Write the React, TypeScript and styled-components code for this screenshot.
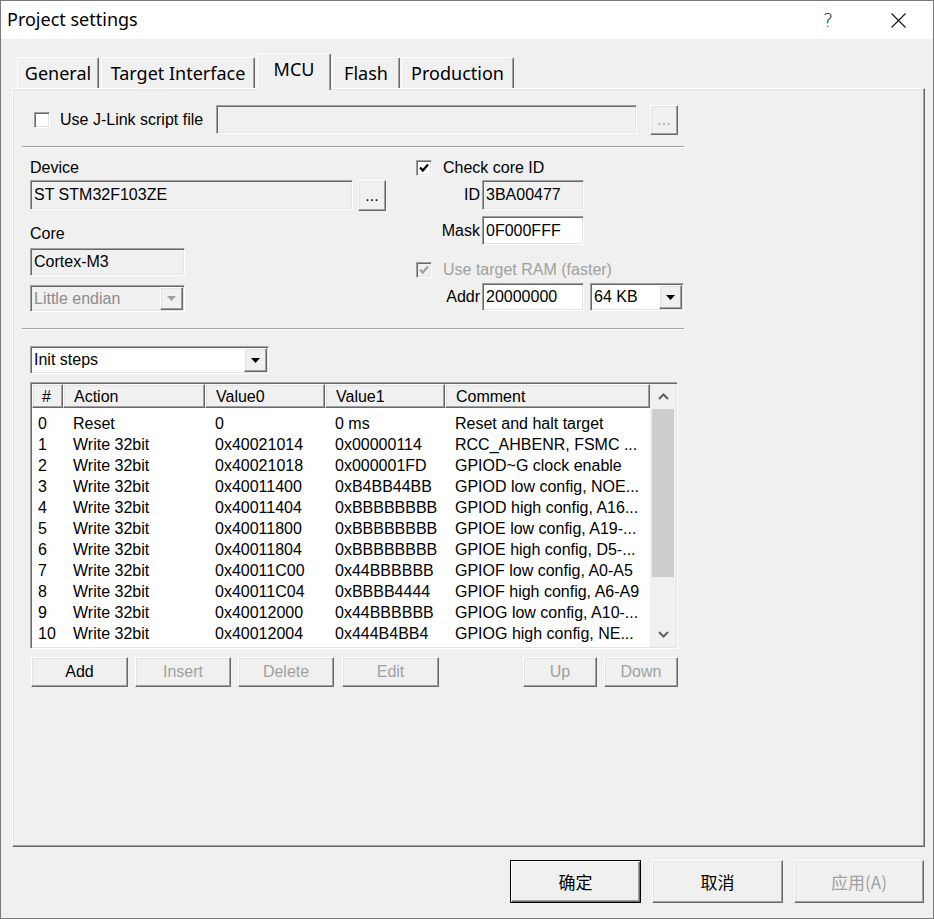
import React from "react";
import styled, { createGlobalStyle, css } from "styled-components";

const GlobalStyle = createGlobalStyle`
  html, body {
    margin: 0;
    padding: 0;
    background: #f0f0f0;
  }
  body {
    font-family: "Liberation Sans", Arial, sans-serif;
    font-size: 16px;
    color: #000;
  }
  * {
    box-sizing: border-box;
  }
`;

const sunken = css`
  border-style: solid;
  border-width: 1px;
  border-color: #a0a0a0 #ffffff #ffffff #a0a0a0;
  box-shadow: inset 1px 1px 0 #696969, inset -1px -1px 0 #e3e3e3;
`;

const raised = css`
  border-style: solid;
  border-width: 1px;
  border-color: #ffffff #696969 #696969 #ffffff;
  box-shadow: inset -1px -1px 0 #a0a0a0, inset 1px 1px 0 #e3e3e3;
`;

const Window = styled.div`
  width: 934px;
  height: 919px;
  display: flex;
  flex-direction: column;
  border: 1px solid #7a7a7a;
  background: #f0f0f0;
`;

const TitleBar = styled.div`
  height: 38px;
  background: #fff;
  display: flex;
  align-items: center;
  flex-shrink: 0;
`;

const TitleText = styled.div`
  flex: 1;
  padding-left: 6px;
  font-family: "Noto Sans", "Liberation Sans", sans-serif;
  font-size: 18px;
  line-height: 24px;
  margin-top: -2px;
`;

const CaptionButton = styled.div`
  width: 70px;
  height: 38px;
  display: flex;
  align-items: center;
  justify-content: center;
  font-family: "DejaVu Sans", "Liberation Sans", sans-serif;
  font-size: 19px;
  font-weight: 300;
  color: #222;
`;

const Body = styled.div`
  flex: 1;
  padding: 14px 9px 0 11px;
  display: flex;
  flex-direction: column;
`;

const TabStrip = styled.div`
  height: 35px;
  display: flex;
  align-items: flex-end;
  padding-left: 5px;
  position: relative;
  z-index: 1;
`;

const Tab = styled.div<{ $w: number; $active?: boolean; $gap: number }>`
  width: ${(p) => p.$w}px;
  height: ${(p) => (p.$active ? 37 : 31)}px;
  margin-right: ${(p) => p.$gap}px;
  margin-bottom: ${(p) => (p.$active ? -2 : 0)}px;
  background: #f0f0f0;
  border-top: 1px solid #fff;
  border-left: 1px solid #fff;
  border-right: 1px solid #696969;
  box-shadow: inset -1px 0 0 #a0a0a0;
  border-radius: 2px 2px 0 0;
  display: flex;
  justify-content: center;
  align-items: ${(p) => (p.$active ? "flex-start" : "center")};
  padding-top: ${(p) => (p.$active ? 3 : 0)}px;
  font-family: "Noto Sans", "Liberation Sans", sans-serif;
  font-size: 18px;
  line-height: 24px;
  white-space: nowrap;
`;

const Panel = styled.div`
  width: 913px;
  height: 759px;
  border-style: solid;
  border-width: 1px;
  border-color: #ffffff #696969 #696969 #ffffff;
  box-shadow: inset -1px -1px 0 #a0a0a0, inset 1px 1px 0 #e3e3e3;
  padding: 16px 0 0 17px;
  display: flex;
  flex-direction: column;
`;

const Row = styled.div<{ $mt?: number }>`
  display: flex;
  align-items: flex-start;
  margin-top: ${(p) => p.$mt ?? 0}px;
`;

const CheckLine = styled.div<{ $w?: number; $pl?: number; $gap: number; $mt?: number }>`
  display: flex;
  align-items: center;
  height: ${(p) => (p.$w ? 30 : 18)}px;
  width: ${(p) => (p.$w ? `${p.$w}px` : "auto")};
  padding-left: ${(p) => p.$pl ?? 0}px;
  gap: ${(p) => p.$gap}px;
  margin-top: ${(p) => p.$mt ?? 0}px;
  white-space: nowrap;
`;

const Box = styled.span<{ $off?: boolean }>`
  ${sunken};
  width: 16px;
  height: 16px;
  flex-shrink: 0;
  background: ${(p) => (p.$off ? "#f0f0f0" : "#fff")};
  display: flex;
  align-items: center;
  justify-content: center;
`;

const LabelText = styled.span<{ $off?: boolean }>`
  color: ${(p) => (p.$off ? "#a0a0a0" : "#000")};
  line-height: 18px;
`;

const Field = styled.div<{ $w: number; $h: number; $off?: boolean }>`
  ${sunken};
  width: ${(p) => p.$w}px;
  height: ${(p) => p.$h}px;
  background: ${(p) => (p.$off ? "#f0f0f0" : "#fff")};
  color: #000;
  display: flex;
  align-items: center;
  padding-left: 3px;
  white-space: nowrap;
  overflow: hidden;
  flex-shrink: 0;
`;

const FieldText = styled.span<{ $off?: boolean }>`
  flex: 1;
  color: ${(p) => (p.$off ? "#8c8c8c" : "#000")};
`;

const ArrowBox = styled.span<{ $off?: boolean }>`
  ${raised};
  width: 23px;
  align-self: stretch;
  margin: 1px 1px 1px 0;
  background: #f0f0f0;
  display: flex;
  align-items: center;
  justify-content: center;
  color: ${(p) => (p.$off ? "#a0a0a0" : "#000")};
`;

const Button = styled.button<{ $w: number; $h?: number; $off?: boolean; $default?: boolean; $cjk?: boolean }>`
  ${raised};
  width: ${(p) => p.$w}px;
  height: ${(p) => p.$h ?? 30}px;
  background: #f0f0f0;
  padding: 0;
  flex-shrink: 0;
  font-family: ${(p) =>
    p.$cjk
      ? `"Noto Sans CJK SC", "Noto Sans", sans-serif`
      : `"Liberation Sans", Arial, sans-serif`};
  font-size: ${(p) => (p.$cjk ? 17 : 16)}px;
  color: ${(p) => (p.$off ? "#a0a0a0" : "#000")};
  display: flex;
  align-items: center;
  justify-content: center;
  ${(p) =>
    p.$default &&
    css`
      border-color: #000;
      box-shadow: inset 1px 1px 0 #ffffff, inset -1px -1px 0 #696969,
        inset -2px -2px 0 #a0a0a0;
    `}
`;

const Separator = styled.div<{ $mt: number }>`
  width: 662px;
  height: 2px;
  margin: ${(p) => p.$mt}px 0 0 -8px;
  border-top: 1px solid #a0a0a0;
  border-bottom: 1px solid #ffffff;
`;

const Columns = styled.div`
  display: flex;
  margin-top: 11px;
  gap: 30px;
`;

const Column = styled.div<{ $w: number }>`
  width: ${(p) => p.$w}px;
  display: flex;
  flex-direction: column;
`;

const Caption = styled.div<{ $mt?: number }>`
  height: 18px;
  line-height: 18px;
  margin-top: ${(p) => p.$mt ?? 0}px;
`;

const FormRow = styled.div<{ $mt: number }>`
  display: flex;
  align-items: center;
  gap: 2px;
  margin-top: ${(p) => p.$mt}px;
`;

const FormLabel = styled.span`
  width: 64px;
  text-align: right;
  white-space: nowrap;
`;

const List = styled.div`
  ${sunken};
  width: 648px;
  height: 267px;
  margin-top: 8px;
  padding: 1px;
  background: #fff;
  display: flex;
`;

const ListMain = styled.div`
  flex: 1;
  display: flex;
  flex-direction: column;
  overflow: hidden;
`;

const HeaderRow = styled.div`
  display: flex;
  height: 24px;
  flex-shrink: 0;
`;

const HeaderCell = styled.div<{ $w: number }>`
  ${raised};
  width: ${(p) => p.$w}px;
  background: #f0f0f0;
  padding: 2px 0 0 ${(p) => (p.$w < 40 ? 9 : 10)}px;
  display: flex;
  align-items: center;
  white-space: nowrap;
`;

const ListBody = styled.div`
  padding-top: 5px;
  display: flex;
  flex-direction: column;
`;

const ItemRow = styled.div`
  display: flex;
  height: 21px;
  align-items: center;
`;

const Cell = styled.div<{ $w: number }>`
  width: ${(p) => p.$w}px;
  padding-left: ${(p) => (p.$w < 40 ? 6 : 10)}px;
  white-space: nowrap;
  overflow: hidden;
`;

const ScrollBar = styled.div`
  width: 26px;
  background: #f0f0f0;
  display: flex;
  flex-direction: column;
  align-items: center;
`;

const ScrollArrow = styled.div`
  height: 25px;
  width: 26px;
  display: flex;
  align-items: center;
  justify-content: center;
  flex-shrink: 0;
`;

const Thumb = styled.div`
  width: 22px;
  height: 168px;
  background: #cdcdcd;
  flex-shrink: 0;
`;

const Track = styled.div`
  flex: 1;
`;

const ButtonRow = styled.div`
  display: flex;
  width: 647px;
  margin: 8px 0 0 1px;
  gap: 7px;
`;

const Spacer = styled.div`
  flex: 1;
`;

const Footer = styled.div`
  display: flex;
  justify-content: flex-end;
  gap: 11px;
  margin-top: 13px;
`;

const Check = ({ off }: { off?: boolean }) => (
  <svg width="10" height="10" viewBox="0 0 10 10">
    <polyline
      points="1,4.5 3.8,7.5 9,1.5"
      fill="none"
      stroke={off ? "#a0a0a0" : "#000"}
      strokeWidth="2.2"
    />
  </svg>
);

const Down = () => (
  <svg width="9" height="5" viewBox="0 0 9 5">
    <path d="M0 0 H9 L4.5 5 Z" fill="currentColor" />
  </svg>
);

const Chevron = ({ up }: { up?: boolean }) => (
  <svg width="11" height="7" viewBox="0 0 11 7">
    <polyline
      points={up ? "1,6 5.5,1.5 10,6" : "1,1 5.5,5.5 10,1"}
      fill="none"
      stroke="#606060"
      strokeWidth="2"
    />
  </svg>
);

const CloseIcon = () => (
  <svg width="15" height="15" viewBox="0 0 15 15">
    <path d="M0.5 0.5 L14.5 14.5 M14.5 0.5 L0.5 14.5" stroke="#111" strokeWidth="1.1" />
  </svg>
);

const cols = [31, 142, 120, 120, 205];

const steps = [
  ["0", "Reset", "0", "0 ms", "Reset and halt target"],
  ["1", "Write 32bit", "0x40021014", "0x00000114", "RCC_AHBENR, FSMC ..."],
  ["2", "Write 32bit", "0x40021018", "0x000001FD", "GPIOD~G clock enable"],
  ["3", "Write 32bit", "0x40011400", "0xB4BB44BB", "GPIOD low config, NOE..."],
  ["4", "Write 32bit", "0x40011404", "0xBBBBBBBB", "GPIOD high config, A16..."],
  ["5", "Write 32bit", "0x40011800", "0xBBBBBBBB", "GPIOE low config, A19-..."],
  ["6", "Write 32bit", "0x40011804", "0xBBBBBBBB", "GPIOE high config, D5-..."],
  ["7", "Write 32bit", "0x40011C00", "0x44BBBBBB", "GPIOF low config, A0-A5"],
  ["8", "Write 32bit", "0x40011C04", "0xBBBB4444", "GPIOF high config, A6-A9"],
  ["9", "Write 32bit", "0x40012000", "0x44BBBBBB", "GPIOG low config, A10-..."],
  ["10", "Write 32bit", "0x40012004", "0x444B4BB4", "GPIOG high config, NE..."],
];

const tabs = [
  { name: "General", w: 82, gap: 2 },
  { name: "Target Interface", w: 154, gap: 2 },
  { name: "MCU", w: 74, gap: 1, active: true },
  { name: "Flash", w: 68, gap: 1 },
  { name: "Production", w: 113, gap: 0 },
];

export default function App() {
  return (
    <>
      <GlobalStyle />
      <Window>
        <TitleBar>
          <TitleText>Project settings</TitleText>
          <CaptionButton>?</CaptionButton>
          <CaptionButton>
            <CloseIcon />
          </CaptionButton>
        </TitleBar>
        <Body>
          <TabStrip>
            {tabs.map((t) => (
              <Tab key={t.name} $w={t.w} $gap={t.gap} $active={t.active}>
                {t.name}
              </Tab>
            ))}
          </TabStrip>
          <Panel>
            <Row>
              <CheckLine $w={186} $pl={4} $gap={10}>
                <Box />
                <LabelText>Use J-Link script file</LabelText>
              </CheckLine>
              <Field $w={421} $h={29} $off />
              <Button $w={28} $off style={{ marginLeft: 13 }}>
                ...
              </Button>
            </Row>
            <Separator $mt={11} />
            <Columns>
              <Column $w={356}>
                <Caption>Device</Caption>
                <Row $mt={3}>
                  <Field $w={323} $h={30} $off>
                    <FieldText>ST STM32F103ZE</FieldText>
                  </Field>
                  <Button $w={28} $h={31} style={{ marginLeft: 5 }}>
                    ...
                  </Button>
                </Row>
                <Caption $mt={14}>Core</Caption>
                <Row $mt={5}>
                  <Field $w={155} $h={28} $off>
                    <FieldText>Cortex-M3</FieldText>
                  </Field>
                </Row>
                <Row $mt={9}>
                  <Field $w={155} $h={27} $off>
                    <FieldText $off>Little endian</FieldText>
                    <ArrowBox $off>
                      <Down />
                    </ArrowBox>
                  </Field>
                </Row>
              </Column>
              <Column $w={268}>
                <CheckLine $gap={11}>
                  <Box>
                    <Check />
                  </Box>
                  <LabelText>Check core ID</LabelText>
                </CheckLine>
                <FormRow $mt={3}>
                  <FormLabel>ID</FormLabel>
                  <Field $w={102} $h={30} $off>
                    <FieldText>3BA00477</FieldText>
                  </Field>
                </FormRow>
                <FormRow $mt={6}>
                  <FormLabel>Mask</FormLabel>
                  <Field $w={102} $h={29}>
                    <FieldText>0F000FFF</FieldText>
                  </Field>
                </FormRow>
                <CheckLine $gap={11} $mt={16}>
                  <Box $off>
                    <Check off />
                  </Box>
                  <LabelText $off>Use target RAM (faster)</LabelText>
                </CheckLine>
                <FormRow $mt={4}>
                  <FormLabel>Addr</FormLabel>
                  <Field $w={102} $h={28}>
                    <FieldText>20000000</FieldText>
                  </Field>
                  <Field $w={94} $h={28} style={{ marginLeft: 4 }}>
                    <FieldText>64 KB</FieldText>
                    <ArrowBox>
                      <Down />
                    </ArrowBox>
                  </Field>
                </FormRow>
              </Column>
            </Columns>
            <Separator $mt={16} />
            <Row $mt={16}>
              <Field $w={239} $h={28}>
                <FieldText>Init steps</FieldText>
                <ArrowBox>
                  <Down />
                </ArrowBox>
              </Field>
            </Row>
            <List>
              <ListMain>
                <HeaderRow>
                  {["#", "Action", "Value0", "Value1", "Comment"].map((h, i) => (
                    <HeaderCell key={h} $w={cols[i]}>
                      {h}
                    </HeaderCell>
                  ))}
                </HeaderRow>
                <ListBody>
                  {steps.map((s) => (
                    <ItemRow key={s[0]}>
                      {s.map((v, i) => (
                        <Cell key={i} $w={cols[i]}>
                          {v}
                        </Cell>
                      ))}
                    </ItemRow>
                  ))}
                </ListBody>
              </ListMain>
              <ScrollBar>
                <ScrollArrow>
                  <Chevron up />
                </ScrollArrow>
                <Thumb />
                <Track />
                <ScrollArrow>
                  <Chevron />
                </ScrollArrow>
              </ScrollBar>
            </List>
            <ButtonRow>
              <Button $w={97}>Add</Button>
              <Button $w={96} $off>
                Insert
              </Button>
              <Button $w={96} $off>
                Delete
              </Button>
              <Button $w={97} $off style={{ marginLeft: 1 }}>
                Edit
              </Button>
              <Spacer />
              <Button $w={74} $off>
                Up
              </Button>
              <Button $w={74} $off>
                Down
              </Button>
            </ButtonRow>
          </Panel>
          <Footer>
            <Button $w={131} $h={43} $cjk $default>
              确定
            </Button>
            <Button $w={131} $h={43} $cjk>
              取消
            </Button>
            <Button $w={130} $h={43} $cjk $off>
              应用(A)
            </Button>
          </Footer>
        </Body>
      </Window>
    </>
  );
}
